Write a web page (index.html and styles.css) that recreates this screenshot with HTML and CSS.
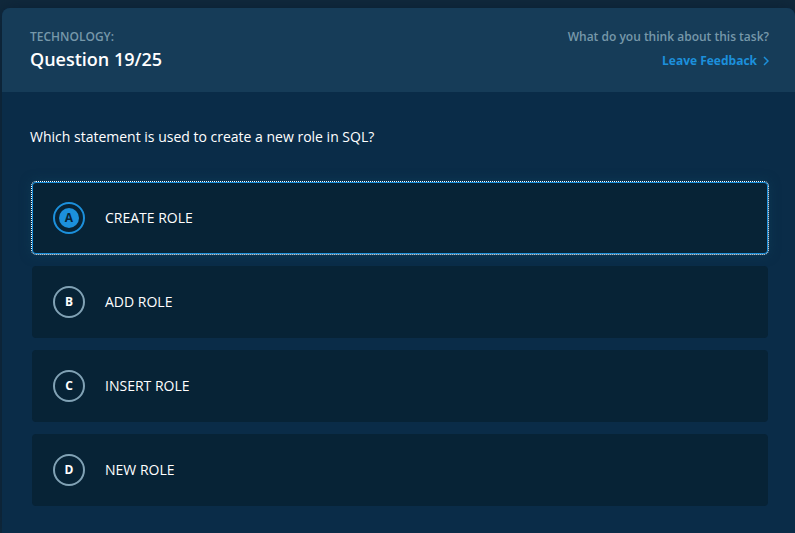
FILE: index.html
```html
<!DOCTYPE html>
<html lang="en">
<head>
<meta charset="utf-8">
<meta name="viewport" content="width=device-width, initial-scale=1">
<title>Question 19/25</title>
<link rel="stylesheet" href="styles.css">
</head>
<body>
<main class="card">
  <header class="card-header">
    <div>
      <p class="eyebrow">TECHNOLOGY:</p>
      <h1 class="title">Question 19/25</h1>
    </div>
    <div class="feedback">
      <p class="feedback-prompt">What do you think about this task?</p>
      <a class="feedback-link" href="#feedback">Leave Feedback
        <svg class="chevron" viewBox="0 0 6 10" aria-hidden="true"><path d="M1 1l4 4-4 4"/></svg>
      </a>
    </div>
  </header>
  <form class="question">
    <fieldset class="choices">
      <legend class="prompt">Which statement is used to create a new role in SQL?</legend>
      <label class="choice" for="a"><input class="choice-input" type="radio" name="answer" id="a" checked><span class="marker"><span class="letter">A</span></span><span>CREATE ROLE</span></label>
      <label class="choice" for="b"><input class="choice-input" type="radio" name="answer" id="b"><span class="marker"><span class="letter">B</span></span><span>ADD ROLE</span></label>
      <label class="choice" for="c"><input class="choice-input" type="radio" name="answer" id="c"><span class="marker"><span class="letter">C</span></span><span>INSERT ROLE</span></label>
      <label class="choice" for="d"><input class="choice-input" type="radio" name="answer" id="d"><span class="marker"><span class="letter">D</span></span><span>NEW ROLE</span></label>
    </fieldset>
  </form>
</main>
</body>
</html>
```
FILE: styles.css
```css
* {
  box-sizing: border-box;
}

body {
  margin: 0;
  min-height: 100vh;
  display: flex;
  padding: 8px 0 0 2px;
  background: #11293c;
  color: #fff;
  font-family: "Open Sans", "Noto Sans", sans-serif;
  font-size: 14px;
  line-height: 20px;
}

p,
h1 {
  margin: 0;
}

.card {
  flex: 1;
  background: #0a2c48;
  border-radius: 8px 8px 0 0;
  box-shadow: 0 0 16px #0a2034;
}

.card-header {
  display: flex;
  justify-content: space-between;
  padding: 19px 26px 21px 28px;
  background: #163c58;
  border-radius: 8px 8px 0 0;
}

.eyebrow,
.feedback-prompt {
  color: #7698aa;
  font-size: 12px;
  font-weight: 600;
}

.title {
  font-size: 18px;
  font-weight: 600;
  line-height: 24px;
}

.feedback {
  display: flex;
  flex-direction: column;
  align-items: flex-end;
  gap: 4px;
}

.feedback-link {
  display: flex;
  align-items: center;
  gap: 6px;
  color: #1c90dc;
  font-size: 12px;
  font-weight: 700;
  text-decoration: none;
}

.chevron {
  width: 6px;
  height: 10px;
  fill: none;
  stroke: currentColor;
  stroke-width: 1.5;
}

.question {
  padding: 35px 27px 27px 28px;
}

.choices {
  display: flex;
  flex-direction: column;
  gap: 12px;
  margin: 0;
  padding: 0 0 0 2px;
  border: 0;
}

.prompt {
  margin: 0 0 35px -2px;
  padding: 0;
}

.choice {
  display: flex;
  align-items: center;
  gap: 20px;
  height: 72px;
  padding: 0 21px;
  background: #072336;
  border-radius: 4px;
  cursor: pointer;
}

.choice-input {
  position: absolute;
  opacity: 0;
}

.marker {
  display: grid;
  place-items: center;
  width: 32px;
  height: 32px;
  border: 2px solid #81a2b5;
  border-radius: 50%;
}

.letter {
  width: 20px;
  height: 20px;
  border-radius: 50%;
  font-size: 12px;
  font-weight: 700;
  text-align: center;
}

.choice:has(:checked) {
  outline: 1px dotted #fff;
  box-shadow: inset 0 0 0 1px #1c90dc, 0 0 12px #0d3b55;
}

.choice:has(:checked) .marker {
  border-color: #1c90dc;
}

.choice:has(:checked) .letter {
  background: #1c90dc;
  color: #072336;
}
```
